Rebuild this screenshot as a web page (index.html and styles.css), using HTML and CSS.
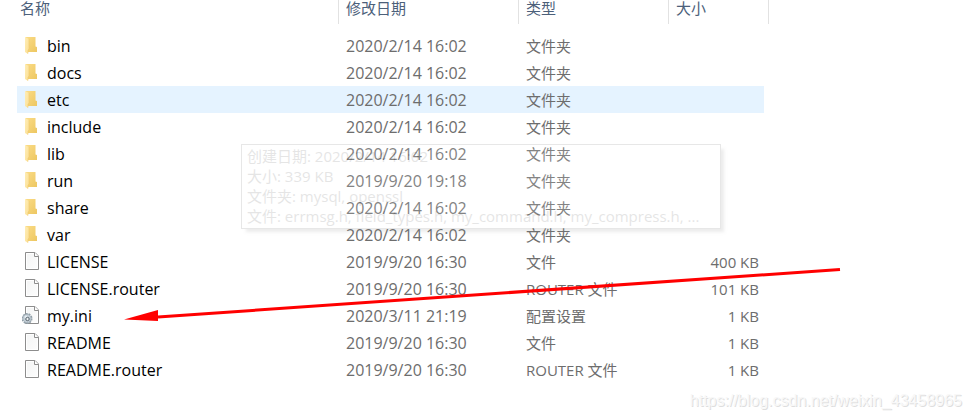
FILE: index.html
```html
<!DOCTYPE html>
<html lang="zh-CN">
<head>
<meta charset="utf-8">
<title>mysql</title>
<link rel="stylesheet" href="styles.css">
</head>
<body>
<svg class="defs" aria-hidden="true">
  <defs>
    <linearGradient id="flap" x1="0" x2="1" y1="0" y2="1"><stop offset="0" stop-color="#ffedb5"/><stop offset="1" stop-color="#fbdf94"/></linearGradient>
    <linearGradient id="back" x1="0" x2="1" y1="0" y2="1"><stop offset="0" stop-color="#fbdc86"/><stop offset="1" stop-color="#edc762"/></linearGradient>
    <linearGradient id="paper" x1="0" x2="1" y1="0" y2="1"><stop offset="0" stop-color="#f3f4f4"/><stop offset="1" stop-color="#fdfdfd"/></linearGradient>
  </defs>
  <symbol id="folder" viewBox="0 0 20 20">
    <path d="M3.500 1H13.500V10.500L15 11V16H5Z" fill="url(#back)"/>
    <path d="M3 1L7 3V13L6 14V18L3 16Z" fill="url(#flap)"/>
    <path d="M7 3V13L6 14V17.500" fill="none" stroke="#f0cb70" stroke-width=".6"/>
  </symbol>
  <symbol id="file" viewBox="0 0 20 20">
    <path d="M3.500 .5H13L16.500 4V17.500H3.500Z" fill="url(#paper)" stroke="#8d8d8d"/>
    <path d="M4.500 1.500H12.500M4.500 1.500V16.500H15.500V5" fill="none" stroke="#fff"/>
    <path d="M12.500 .5V4.500H16.500" fill="#fff" stroke="#8d8d8d"/>
  </symbol>
  <symbol id="config" viewBox="0 0 20 20">
    <use href="#file" width="20" height="20"/>
    <circle cx="5" cy="12.500" r="4.700" fill="none" stroke="#8f9ca6" stroke-width="1.600" stroke-dasharray="1.900 1"/>
    <circle cx="5" cy="12.500" r="4.200" fill="#c3ced6" stroke="#9ba9b3" stroke-width=".8"/>
    <circle cx="4" cy="11" r="1.500" fill="#e7eef2"/>
    <circle cx="5.500" cy="13" r="1.700" fill="#eef2f4" stroke="#56636c"/>
  </symbol>
</svg>

<main class="explorer">
  <table class="files">
    <colgroup><col class="c-name"><col class="c-date"><col class="c-type"><col class="c-size"></colgroup>
    <thead>
      <tr><th scope="col">名称</th><th scope="col">修改日期</th><th scope="col">类型</th><th scope="col">大小</th></tr>
    </thead>
    <tbody>
      <tr><td><svg class="icon"><use href="#folder"/></svg>bin</td><td>2020/2/14 16:02</td><td>文件夹</td><td></td></tr>
      <tr><td><svg class="icon"><use href="#folder"/></svg>docs</td><td>2020/2/14 16:02</td><td>文件夹</td><td></td></tr>
      <tr class="hover"><td><svg class="icon"><use href="#folder"/></svg>etc</td><td>2020/2/14 16:02</td><td>文件夹</td><td></td></tr>
      <tr><td><svg class="icon"><use href="#folder"/></svg>include</td><td>2020/2/14 16:02</td><td>文件夹</td><td></td></tr>
      <tr><td><svg class="icon"><use href="#folder"/></svg>lib</td><td>2020/2/14 16:02</td><td>文件夹</td><td></td></tr>
      <tr><td><svg class="icon"><use href="#folder"/></svg>run</td><td>2019/9/20 19:18</td><td>文件夹</td><td></td></tr>
      <tr><td><svg class="icon"><use href="#folder"/></svg>share</td><td>2020/2/14 16:02</td><td>文件夹</td><td></td></tr>
      <tr><td><svg class="icon"><use href="#folder"/></svg>var</td><td>2020/2/14 16:02</td><td>文件夹</td><td></td></tr>
      <tr><td><svg class="icon"><use href="#file"/></svg>LICENSE</td><td>2019/9/20 16:30</td><td>文件</td><td>400 KB</td></tr>
      <tr><td><svg class="icon"><use href="#file"/></svg>LICENSE.router</td><td>2019/9/20 16:30</td><td>ROUTER 文件</td><td>101 KB</td></tr>
      <tr><td><svg class="icon"><use href="#config"/></svg>my.ini</td><td>2020/3/11 21:19</td><td>配置设置</td><td>1 KB</td></tr>
      <tr><td><svg class="icon"><use href="#file"/></svg>README</td><td>2019/9/20 16:30</td><td>文件</td><td>1 KB</td></tr>
      <tr><td><svg class="icon"><use href="#file"/></svg>README.router</td><td>2019/9/20 16:30</td><td>ROUTER 文件</td><td>1 KB</td></tr>
    </tbody>
  </table>

  <div class="tooltip" role="tooltip">
    <div>创建日期: 2020/2/14 16:02</div>
    <div>大小: 339 KB</div>
    <div>文件夹: mysql, openssl</div>
    <div>文件: errmsg.h, field_types.h, my_command.h, my_compress.h, ...</div>
  </div>

  <svg class="arrow" viewBox="0 0 720 56" aria-hidden="true">
    <path d="M716 5.500L34 53" stroke="#f00" stroke-width="3"/>
    <path d="M0 55.500L34 46V57Z" fill="#f00"/>
  </svg>
</main>
<footer class="watermark">https://blog.csdn.net/weixin_43458965</footer>
</body>
</html>
```

FILE: styles.css
```css
body {
  margin: 0;
  background: #fff;
  color: #000;
  font-family: "Open Sans", "Noto Sans CJK SC", sans-serif;
  font-size: 15px;
}

.defs {
  position: absolute;
  width: 0;
  height: 0;
}

.explorer {
  position: relative;
  padding-left: 17px;
}

.files {
  table-layout: fixed;
  width: 752px;
  border-collapse: separate;
  border-spacing: 0;
}

.c-name { width: 322px; }
.c-date { width: 180px; }
.c-type { width: 150px; }
.c-size { width: 100px; }

th {
  box-sizing: border-box;
  height: 24px;
  padding: 0 0 8px 7px;
  border-right: 1px solid #e2e2e2;
  color: #4c607a;
  font-weight: 400;
  line-height: 16px;
  text-align: left;
}

th:first-child { padding-left: 3px; }

tbody::before {
  content: "";
  display: block;
  height: 8px;
}

td {
  height: 25px;
  padding: 2px 0 0 7px;
  color: #6d6d6d;
  line-height: 25px;
  white-space: nowrap;
}

td:first-child,
td:nth-child(2) {
  font-size: 16px;
}

td:first-child {
  padding-left: 5px;
  color: #000;
}

td:last-child {
  padding-right: 5px;
  border-right: 5px solid #fff;
  text-align: right;
}

.hover td {
  background: #e5f3ff;
  background-clip: padding-box;
}

.icon {
  width: 20px;
  height: 20px;
  margin: -4px 5px 0 0;
  vertical-align: middle;
}

.tooltip {
  position: absolute;
  top: 144px;
  left: 241px;
  box-sizing: border-box;
  width: 480px;
  padding: 1px 5px 2px;
  border: 1px solid #666;
  background: #fff;
  box-shadow: 4px 4px 3px -1px #888;
  color: #575757;
  line-height: 20px;
  white-space: nowrap;
  opacity: 0.15;
}

.arrow {
  position: absolute;
  top: 264px;
  left: 124px;
  width: 720px;
  height: 56px;
  overflow: visible;
}

.watermark {
  position: absolute;
  right: 9px;
  bottom: 8px;
  color: #f8f8f8;
  font-family: "Liberation Sans", sans-serif;
  font-size: 16px;
  line-height: 20px;
  text-shadow: 1px 1px 0 #dedede;
}
```
